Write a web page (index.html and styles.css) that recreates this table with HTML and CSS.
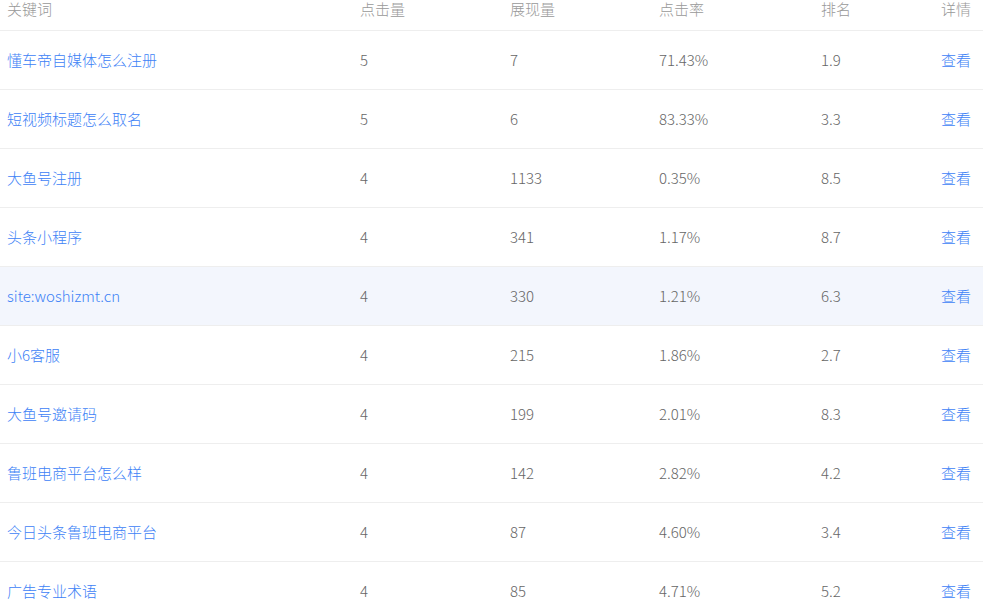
FILE: index.html
```html
<!DOCTYPE html>
<html lang="zh-CN">
<head>
    <meta charset="UTF-8">
    <title>关键词列表</title>
    <link rel="stylesheet" href="styles.css">
</head>
<body>
    <table class="kw-table">
        <colgroup>
            <col class="c-kw">
            <col class="c-click">
            <col class="c-show">
            <col class="c-rate">
            <col class="c-rank">
            <col class="c-more">
        </colgroup>
        <thead>
            <tr>
                <th>关键词</th>
                <th>点击量</th>
                <th>展现量</th>
                <th>点击率</th>
                <th>排名</th>
                <th class="more">详情</th>
            </tr>
        </thead>
        <tbody>
            <tr><td><a href="#">懂车帝自媒体怎么注册</a></td><td>5</td><td>7</td><td>71.43%</td><td>1.9</td><td class="more"><a href="#">查看</a></td></tr>
            <tr><td><a href="#">短视频标题怎么取名</a></td><td>5</td><td>6</td><td>83.33%</td><td>3.3</td><td class="more"><a href="#">查看</a></td></tr>
            <tr><td><a href="#">大鱼号注册</a></td><td>4</td><td>1133</td><td>0.35%</td><td>8.5</td><td class="more"><a href="#">查看</a></td></tr>
            <tr><td><a href="#">头条小程序</a></td><td>4</td><td>341</td><td>1.17%</td><td>8.7</td><td class="more"><a href="#">查看</a></td></tr>
            <tr class="active"><td><a href="#">site:woshizmt.cn</a></td><td>4</td><td>330</td><td>1.21%</td><td>6.3</td><td class="more"><a href="#">查看</a></td></tr>
            <tr><td><a href="#">小6客服</a></td><td>4</td><td>215</td><td>1.86%</td><td>2.7</td><td class="more"><a href="#">查看</a></td></tr>
            <tr><td><a href="#">大鱼号邀请码</a></td><td>4</td><td>199</td><td>2.01%</td><td>8.3</td><td class="more"><a href="#">查看</a></td></tr>
            <tr><td><a href="#">鲁班电商平台怎么样</a></td><td>4</td><td>142</td><td>2.82%</td><td>4.2</td><td class="more"><a href="#">查看</a></td></tr>
            <tr><td><a href="#">今日头条鲁班电商平台</a></td><td>4</td><td>87</td><td>4.60%</td><td>3.4</td><td class="more"><a href="#">查看</a></td></tr>
            <tr><td><a href="#">广告专业术语</a></td><td>4</td><td>85</td><td>4.71%</td><td>5.2</td><td class="more"><a href="#">查看</a></td></tr>
        </tbody>
    </table>
</body>
</html>
```

FILE: styles.css
```css
/* Couleurs */
:root {
    --text: #666666;
    --head: #999999;
    --link: #3d82f6;
    --line: #eeeeee;
    --hover: #f3f6fd;
}

* {
    box-sizing: border-box;
    margin: 0;
    padding: 0;
}

body {
    font-family: "Microsoft YaHei", "Noto Sans CJK SC", "Noto Sans", sans-serif;
    font-size: 15px;
    font-weight: 300;
    color: var(--text);
    background: #ffffff;
    overflow: hidden;
}

.kw-table {
    width: 983px;
    border-collapse: collapse;
    table-layout: fixed;
}

.c-kw { width: 353px; }
.c-click { width: 150px; }
.c-show { width: 149px; }
.c-rate { width: 162px; }
.c-rank { width: 110px; }
.c-more { width: 59px; }

th {
    font-weight: 300;
    color: var(--head);
    text-align: left;
    height: 30px;
    line-height: 17px;
    vertical-align: top;
    padding: 0 0 0 7px;
    border-bottom: 1px solid var(--line);
}

td {
    height: 59px;
    line-height: 18px;
    padding: 0 0 0 7px;
    border-bottom: 1px solid var(--line);
    white-space: nowrap;
}

th.more,
td.more {
    text-align: right;
    padding-right: 12px;
    padding-left: 0;
}

tr.active td {
    background: var(--hover);
}

a {
    color: var(--link);
    text-decoration: none;
}
```
